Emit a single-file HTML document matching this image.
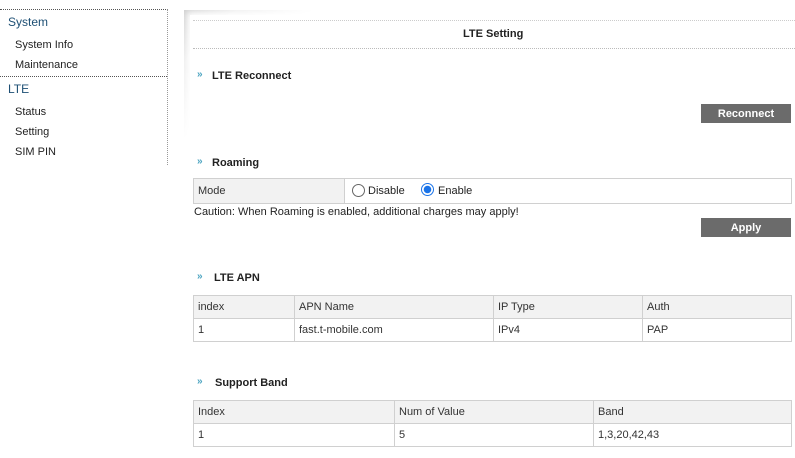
<!DOCTYPE html>
<html><head><style>
body{margin:0;width:795px;height:458px;background:#fff;font-family:"Liberation Sans",Arial,sans-serif;font-size:11px;color:#222;position:relative;overflow:hidden}
.a{position:absolute}
.side{left:0;top:9px;width:167px;height:155px;border-top:1px dotted #555;border-right:1px dotted #999}
.sep{left:0;top:76px;width:167px;border-top:1px dotted #555}
.grp{color:#1d4f74;font-size:12px}
.it{font-size:11px;color:#222}
.h{font-weight:bold;font-size:11px}
.arr{color:#4aa3c0;font-size:10px;font-weight:bold}
.btn{background:#6b6b6b;color:#fff;font-weight:bold;font-size:11px;text-align:center;width:90px;height:19px;line-height:21px;left:701px}
table{position:absolute;border-collapse:collapse;font-size:11px}
td{border:1px solid #d0d0d0;height:22px;padding:0 0 0 4px;color:#333}
tr.hd td{background:#f2f2f2}
.rad{position:absolute;width:13px;height:13px;border:1px solid #666;border-radius:50%;box-sizing:border-box}
.rad.on{border:1px solid #1a73e8;background:radial-gradient(circle,#1a73e8 0 3.5px,#fff 4px)}
</style></head><body>
<div class="a side"></div>
<div class="a sep"></div>
<div class="a grp" style="left:8px;top:15px">System</div>
<div class="a it" style="left:15px;top:39px">System Info</div>
<div class="a it" style="left:15px;top:59px">Maintenance</div>
<div class="a grp" style="left:8px;top:82px">LTE</div>
<div class="a it" style="left:15px;top:106px">Status</div>
<div class="a it" style="left:15px;top:126px">Setting</div>
<div class="a it" style="left:15px;top:146px">SIM PIN</div>

<div class="a" style="left:184px;top:10px;width:130px;height:130px;background:linear-gradient(135deg,#d0d0d0 0%,#eeeeee 20%,#fff 50%)"></div>
<div class="a" style="left:190px;top:15px;width:130px;height:130px;background:#fff;box-shadow:-3px -3px 6px #fff"></div>
<div class="a" style="left:193px;top:20px;width:602px;border-top:1px dotted #ccc"></div>
<div class="a" style="left:193px;top:48px;width:602px;border-top:1px dotted #bbb"></div>
<div class="a h" style="left:463px;top:28px">LTE Setting</div>

<div class="a arr" style="left:197px;top:69px">»</div>
<div class="a h" style="left:212px;top:70px">LTE Reconnect</div>
<div class="a btn" style="top:104px">Reconnect</div>

<div class="a arr" style="left:197px;top:156px">»</div>
<div class="a h" style="left:212px;top:157px">Roaming</div>
<table style="left:193px;top:178px;width:599px">
<tr><td style="width:146px;background:#f2f2f2;height:24px">Mode</td><td></td></tr></table>
<div class="rad" style="left:352px;top:184px"></div>
<div class="a" style="left:368px;top:185px">Disable</div>
<div class="rad on" style="left:421px;top:183px"></div>
<div class="a" style="left:438px;top:185px">Enable</div>
<div class="a" style="left:194px;top:206px;font-size:11px">Caution: When Roaming is enabled, additional charges may apply!</div>
<div class="a btn" style="top:218px">Apply</div>

<div class="a arr" style="left:197px;top:271px">»</div>
<div class="a h" style="left:214px;top:272px">LTE APN</div>
<table style="left:193px;top:295px;width:599px">
<tr class="hd"><td style="width:96px">index</td><td style="width:194px">APN Name</td><td style="width:144px">IP Type</td><td>Auth</td></tr>
<tr><td>1</td><td>fast.t-mobile.com</td><td>IPv4</td><td>PAP</td></tr></table>

<div class="a arr" style="left:197px;top:376px">»</div>
<div class="a h" style="left:215px;top:377px">Support Band</div>
<table style="left:193px;top:400px;width:599px">
<tr class="hd"><td style="width:196px">Index</td><td style="width:194px">Num of Value</td><td>Band</td></tr>
<tr><td>1</td><td>5</td><td>1,3,20,42,43</td></tr></table>
</body></html>
